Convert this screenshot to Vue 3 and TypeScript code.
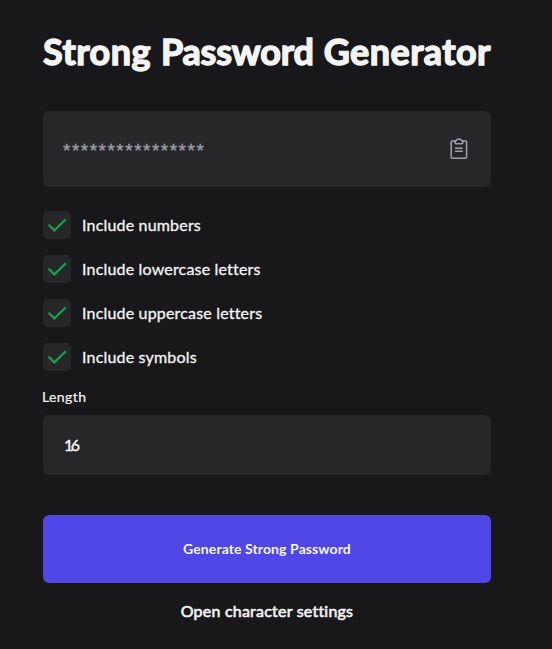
<script setup lang="ts">
import { ref } from 'vue'

interface Option {
  id: string
  label: string
  checked: boolean
}

const password = ref('****************')
const length = ref('16')
const options = ref<Option[]>([
  { id: 'numbers', label: 'Include numbers', checked: true },
  { id: 'lowercase', label: 'Include lowercase letters', checked: true },
  { id: 'uppercase', label: 'Include uppercase letters', checked: true },
  { id: 'symbols', label: 'Include symbols', checked: true },
])
</script>

<template>
  <main class="page">
    <h1 class="title"><span class="strong">Strong</span> <span class="pass">Password</span> <span class="gen">Generator</span></h1>

    <div class="output">
      <span class="password">{{ password }}</span>
      <button class="copy" type="button">
        <svg width="18" height="22" viewBox="0 0 18 22" fill="none" stroke="currentColor" stroke-width="1.5" stroke-linejoin="round" stroke-linecap="round">
          <path d="M5 3H2.2Q1.2 3 1.2 4V19.2Q1.2 20.2 2.2 20.2H15.6Q16.6 20.2 16.6 19.2V4Q16.6 3 15.6 3H13" />
          <path d="M5 2.7H6.3C6.7 .4 11.1 .4 11.5 2.7H12.8V4.4Q12.8 5.7 11.5 5.7H6.3Q5 5.7 5 4.4Z" />
          <path d="M5.6 10.2H12.2M5.6 13.2H12.2" />
        </svg>
      </button>
    </div>

    <div class="options">
      <label v-for="option in options" :key="option.id" class="option">
        <span class="box" @click="option.checked = !option.checked">
          <svg v-if="option.checked" width="20" height="16" viewBox="0 0 20 16" fill="none" stroke="currentColor" stroke-width="2.2">
            <path d="M1.6 7.8L7.4 13.4L18.8 2.2" />
          </svg>
        </span>
        <span class="label">{{ option.label }}</span>
      </label>
    </div>

    <label class="length-label" for="length">Length</label>
    <input id="length" v-model="length" class="length" type="text" />

    <button class="generate" type="button">Generate Strong Password</button>
    <button class="settings" type="button">Open character settings</button>
  </main>
</template>

<style>
html,
body {
  background: #18181a;
}
</style>

<style scoped>
.page {
  box-sizing: border-box;
  width: 552px;
  height: 649px;
  padding: 28px 61px 0 43px;
  display: flex;
  flex-direction: column;
  overflow: hidden;
  background: #18181a;
  color: #f4f4f5;
  font-family: Lato, 'Liberation Sans', sans-serif;
}

button,
input {
  border: 0;
  padding: 0;
  margin: 0;
  font-family: inherit;
  color: inherit;
  background: none;
}

.title {
  display: flex;
  justify-content: space-between;
  margin: 0 0 36px;
  height: 47px;
  line-height: 47px;
  font-size: 36px;
  font-weight: 700;
  white-space: nowrap;
  -webkit-text-stroke: 1.4px currentColor;
}

.strong {
  letter-spacing: 0.45px;
}

.pass {
  letter-spacing: -0.2px;
}

.gen {
  letter-spacing: 0.45px;
}

.output {
  box-sizing: border-box;
  display: flex;
  align-items: center;
  justify-content: space-between;
  height: 76px;
  padding: 0 23px 0 20px;
  border-radius: 6px;
  background: #27272a;
  color: #a1a1aa;
}

.password {
  padding-top: 3px;
  font-family: 'Liberation Sans', sans-serif;
  font-size: 19px;
  letter-spacing: 1.5px;
  -webkit-text-stroke: 0.3px currentColor;
}

.copy {
  display: flex;
}

.options {
  display: flex;
  flex-direction: column;
  gap: 16px;
  margin-top: 24px;
}

.option {
  display: flex;
  align-items: center;
  gap: 11px;
  height: 28px;
  font-size: 16px;
  line-height: 28px;
  -webkit-text-stroke: 0.3px currentColor;
}

.label {
  letter-spacing: 0.18px;
}

.box {
  display: flex;
  align-items: center;
  justify-content: center;
  width: 28px;
  height: 28px;
  border-radius: 5px;
  background: #27272a;
  color: #16a34a;
}

.length-label {
  margin: 16px 0 8px -1px;
  height: 20px;
  font-size: 14px;
  line-height: 20px;
  letter-spacing: 0.4px;
  -webkit-text-stroke: 0.2px currentColor;
}

.length {
  box-sizing: border-box;
  width: 100%;
  height: 60px;
  padding: 0 21px 1px;
  border-radius: 6px;
  background: #27272a;
  font-size: 16px;
  letter-spacing: -2.6px;
  -webkit-text-stroke: 0.4px currentColor;
}

.generate {
  height: 68px;
  margin-top: 40px;
  padding-bottom: 1px;
  border-radius: 6px;
  background: #4f46e5;
  font-size: 14px;
  font-weight: 700;
  letter-spacing: 0.1px;
}

.settings {
  height: 24px;
  margin-top: 16px;
  font-size: 16px;
  line-height: 24px;
  letter-spacing: 0.22px;
  -webkit-text-stroke: 0.6px currentColor;
}
</style>
